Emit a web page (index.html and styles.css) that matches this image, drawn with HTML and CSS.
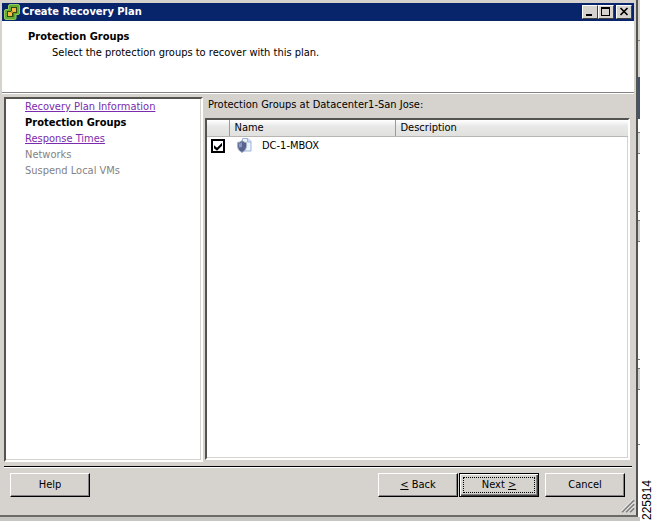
FILE: index.html
```html
<!DOCTYPE html>
<html lang="en">
<head>
<meta charset="utf-8">
<title>Create Recovery Plan</title>
<link rel="stylesheet" href="styles.css">
</head>
<body>
<div class="desktop">
  <main class="window">
    <header class="titlebar">
      <svg class="app-icon" viewBox="0 0 16 16" aria-hidden="true">
        <path d="M6 .5h8Q15.500.5 15.500 2v7q0 1.500-1.500 1.500h-2V14q0 1.500-1.500 1.500H2Q.5 15.500.5 14V7q0-1.500 1.500-1.500h2.500V2Q4.500.5 6 .5z" fill="#63ad35" stroke="#96cc5c"/>
        <path d="M7 3h6v6H9.500v4H3V7h4z" fill="#32480d"/>
        <path d="M8 4h4v4H8zM4 8h4v4H4z" fill="#f7b944"/>
        <path d="M7 7h2v2H7z" fill="#c6922c"/>
      </svg>
      <h1 class="title">Create Recovery Plan</h1>
      <div class="caption-buttons">
        <button class="caption" type="button" aria-label="Minimize"><svg viewBox="0 0 12 10" shape-rendering="crispEdges"><path d="M2 7h6v2H2z"/></svg></button>
        <button class="caption" type="button" aria-label="Maximize"><svg viewBox="0 0 12 10" shape-rendering="crispEdges"><path fill-rule="evenodd" d="M1 0h9v9H1zM2 2v6h7V2z"/></svg></button>
        <button class="caption close" type="button" aria-label="Close"><svg viewBox="0 0 12 10"><path d="M2.500 1l7 7M9.500 1l-7 7" stroke="#000" stroke-width="1.700"/></svg></button>
      </div>
    </header>

    <section class="banner">
      <h2 class="banner-title">Protection Groups</h2>
      <p class="banner-text">Select the protection groups to recover with this plan.</p>
    </section>

    <div class="content">
      <nav class="steps" aria-label="Steps">
        <a class="step link" href="#information">Recovery Plan Information</a>
        <span class="step current" aria-current="step">Protection Groups</span>
        <a class="step link" href="#times">Response Times</a>
        <span class="step disabled">Networks</span>
        <span class="step disabled">Suspend Local VMs</span>
      </nav>
      <section class="panel">
        <h3 class="panel-title" id="groups-title">Protection Groups at Datacenter1-San Jose:</h3>
        <div class="list">
          <table class="groups" aria-labelledby="groups-title">
            <colgroup><col class="col-check"><col class="col-name"><col></colgroup>
            <thead>
              <tr><th aria-label="Selected"></th><th>Name</th><th>Description</th></tr>
            </thead>
            <tbody>
              <tr>
                <td class="check-cell"><input class="check" type="checkbox" id="group-1" checked></td>
                <td>
                  <label class="group" for="group-1">
                    <svg class="group-icon" viewBox="0 0 16 16" aria-hidden="true">
                      <path d="M5.500.5h5.500l3 3v9.500H5.500z" fill="#eef4fc" stroke="#9db5d8"/>
                      <path d="M10.500.5V4H14" fill="#d0def2" stroke="#9db5d8"/>
                      <path d="M5 2.500Q7 4.500 9.500 4.500 10.500 12 5 14.500-.5 12 .5 4.500 3 4.500 5 2.500z" fill="#56648f" stroke="#a9b1c6"/>
                      <path d="M5 4Q3.500 5.500 1.500 5.500 1.500 8 2.200 9.500L5 9z" fill="#8b98bf"/>
                    </svg>
                    DC-1-MBOX
                  </label>
                </td>
                <td></td>
              </tr>
            </tbody>
          </table>
        </div>
      </section>
    </div>

    <footer class="actions">
      <button class="button" type="button">Help</button>
      <div class="wizard-buttons">
        <button class="button" type="button"><u>&lt;</u> Back</button>
        <button class="button default" type="button">Next <u>&gt;</u></button>
        <button class="button cancel" type="button">Cancel</button>
      </div>
    </footer>
    <svg class="grip" viewBox="0 0 14 14" aria-hidden="true">
      <path d="M1 13L13 1M5 13l8-8M9 13l4-4" stroke="#808080" stroke-width="2"/>
      <path d="M0 12.500L12.500 0M4 12.500L13 3.500M8 12.500l5-5" stroke="#fff"/>
    </svg>
  </main>
  <div class="backdrop"></div>
</div>
<aside class="figure-margin"><span class="figure-number">225814</span></aside>
</body>
</html>
```

FILE: styles.css
```css
* {
  box-sizing: border-box;
}

body {
  display: flex;
  min-height: 100vh;
  margin: 0;
  background: #fff;
  color: #000;
  font: 11px/16px "DejaVu Sans Condensed", "DejaVu Sans", sans-serif;
}

h1, h2, h3, p {
  margin: 0;
  font-size: 11px;
}

.desktop {
  display: flex;
  flex: 1;
  padding-bottom: 4px;
  background: #c8c6c2;
}

.window {
  position: relative;
  display: flex;
  flex: 1;
  flex-direction: column;
  padding: 3px 2px 0;
  border-right: 2px solid #55534f;
  border-bottom: 2px solid #6c6a66;
  background: #d6d3ce;
}

.backdrop {
  width: 2px;
  background: linear-gradient(#d6d3ce 40px, #808080 40px 41px, #d6d3ce 41px 77px, #435468 77px 119px, #fff 119px 132px, #777 132px 133px, #ddd 133px 153px, #777 153px 154px, #fff 154px 211px, #777 211px 212px, #fff 212px 220px, #777 220px 221px, #d2d2d2 221px 241px, #777 241px 242px, #fff 242px 359px, #777 359px 360px, #fff 360px 368px, #777 368px 369px, #d2d2d2 369px 389px, #777 389px 390px, #fff 390px 444px, #777 444px 445px, #fff 445px);
}

.titlebar {
  display: flex;
  align-items: center;
  height: 18px;
  padding: 0 2px;
  background: #08246b;
  color: #fff;
}

.app-icon {
  width: 16px;
  height: 16px;
  margin-right: 2px;
}

.title {
  flex: 1;
}

.caption-buttons {
  display: flex;
}

.caption {
  display: flex;
  width: 16px;
  height: 14px;
  padding: 1px;
  border: 1px solid;
  border-color: #fff #404040 #404040 #fff;
  background: #d6d3ce;
}

.caption svg {
  width: 12px;
  height: 10px;
}

.close {
  margin-left: 2px;
}

.banner {
  min-height: 72px;
  padding: 8px 26px;
  border-bottom: 1px solid #848284;
  background: #fff;
}

.banner-text {
  padding-left: 24px;
}

.content {
  display: flex;
  flex: 1;
  gap: 2px;
  padding: 3px 4px 4px 2px;
  border-top: 1px solid #fff;
}

.steps {
  display: flex;
  flex: none;
  flex-direction: column;
  width: 199px;
  padding: 0 19px;
  border: 2px solid;
  border-color: #55534f #fff #fff #55534f;
  background: #fff;
  box-shadow: inset -1px -1px #d6d3ce;
}

.step.link {
  color: #7b2cae;
}

.step.current {
  font-weight: bold;
}

.step.disabled {
  color: #848284;
}

.panel {
  display: flex;
  flex: 1;
  flex-direction: column;
  padding-bottom: 2px;
}

.panel-title {
  padding: 0 3px 5px;
  font-weight: normal;
}

.list {
  flex: 1;
  border: 2px solid;
  border-color: #55534f #fff #fff #55534f;
  background: #fff;
  box-shadow: inset -1px -1px #d6d3ce;
}

.groups {
  width: 100%;
  border-collapse: collapse;
  table-layout: fixed;
}

.col-check {
  width: 22px;
}

.col-name {
  width: 166px;
}

.groups th {
  height: 16px;
  padding: 0 5px;
  border-right: 1px solid #9a9a98;
  border-bottom: 1px solid #b8b6b2;
  background: linear-gradient(#fff, #e8e8e8 40%, #e0e0de);
  font-weight: normal;
  line-height: 14px;
  text-align: left;
}

.groups th:last-child {
  border-right: 0;
}

.groups td {
  height: 20px;
  padding: 0 8px;
}

.groups .check-cell {
  padding: 0 4px;
}

.check {
  display: block;
  width: 14px;
  height: 14px;
  margin: 0;
  border: 2px solid #000;
  background: #fff;
  appearance: none;
}

.check:checked::before {
  display: block;
  width: 10px;
  height: 10px;
  background: #000;
  clip-path: polygon(10% 40%, 40% 65%, 90% 15%, 90% 45%, 40% 95%, 10% 70%);
  content: "";
}

.group {
  display: flex;
  align-items: center;
  gap: 9px;
}

.group-icon {
  width: 16px;
  height: 16px;
}

.actions {
  display: flex;
  justify-content: space-between;
  margin: 0 2px;
  padding: 6px 7px 18px 6px;
  border-top: 1px solid #000;
  box-shadow: inset 0 1px #fff;
}

.wizard-buttons {
  display: flex;
  gap: 1px;
}

.button {
  width: 80px;
  height: 24px;
  padding: 0;
  border: 1px solid;
  border-color: #fff #000 #000 #fff;
  background: #d6d3ce;
  box-shadow: inset -1px -1px #848284;
  color: #000;
  font: inherit;
}

.default {
  border-color: #000;
  outline: 1px dotted #000;
  outline-offset: -5px;
  box-shadow: inset 1px 1px #fff, inset -1px -1px #404040, inset -2px -2px #848284;
}

.cancel {
  margin-left: 5px;
}

.grip {
  position: absolute;
  right: 1px;
  bottom: 2px;
  width: 14px;
  height: 14px;
}

.figure-margin {
  display: flex;
  align-items: flex-end;
  justify-content: flex-end;
  width: 13px;
  padding-bottom: 1px;
}

.figure-number {
  font: 12px/12px "Liberation Sans", Arial, sans-serif;
  transform: rotate(180deg);
  writing-mode: vertical-rl;
}
```
